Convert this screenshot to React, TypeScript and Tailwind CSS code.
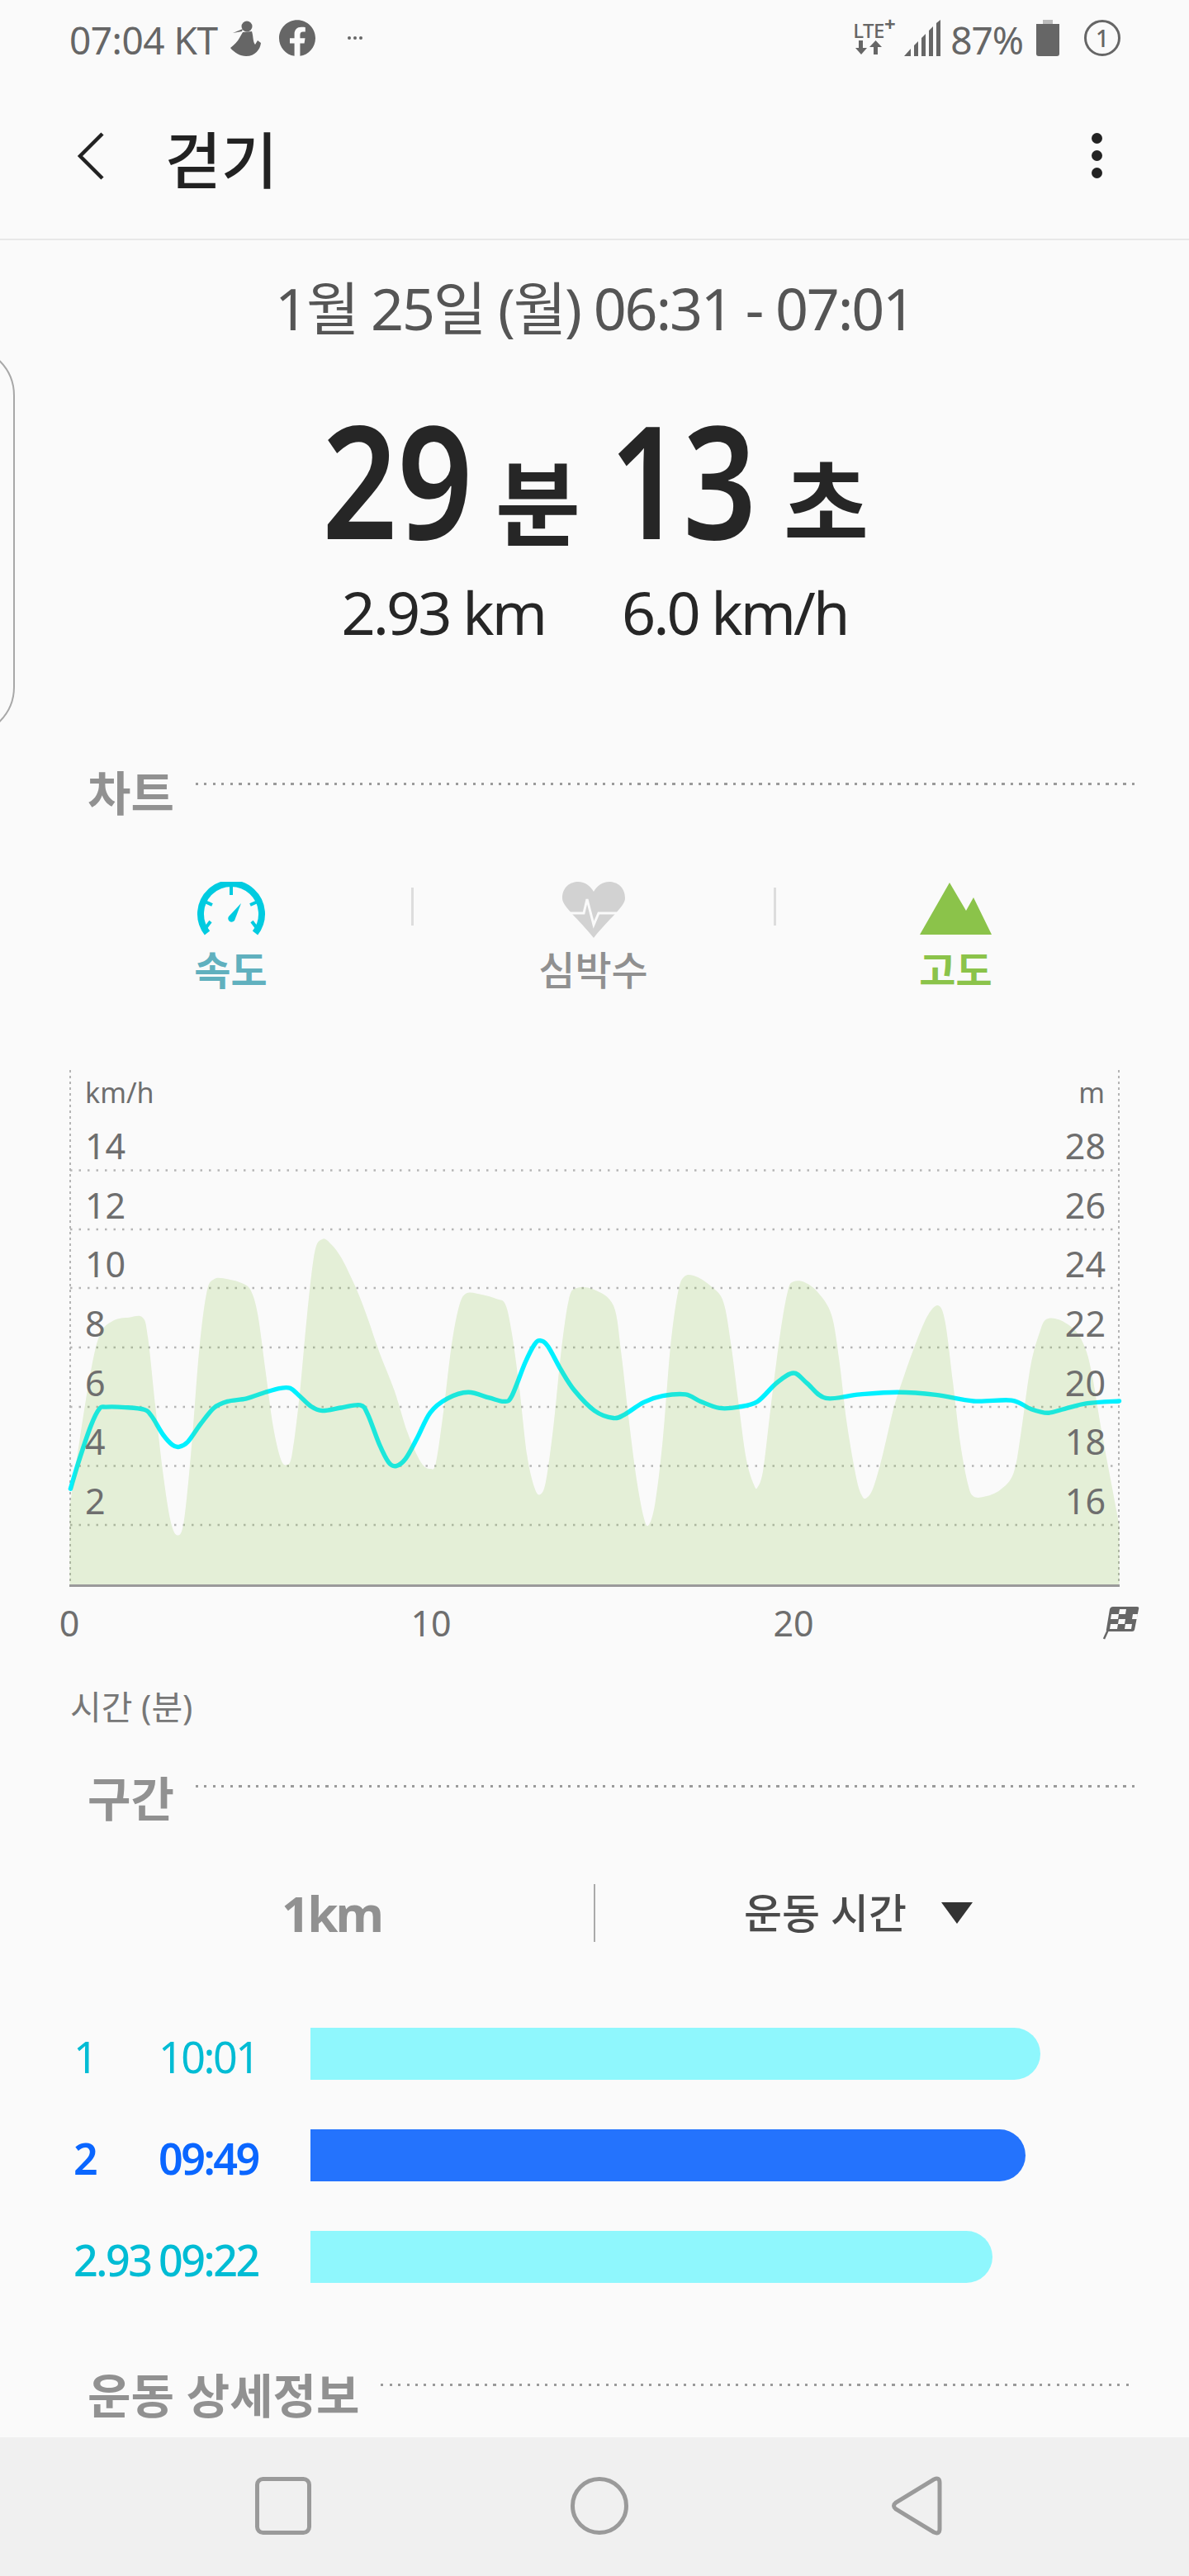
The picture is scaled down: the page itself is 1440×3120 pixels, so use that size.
import React from "react";

type Pt = [number, number];

// points are read off the reference in chart units, smoothed below
const areaPts: Pt[] = [
  [184, 1220], [210, 1040], [240, 850], [265, 750], [300, 715], [340, 707], [376, 707], [390, 760], [410, 950], [430, 1130], [450, 1260], [468, 1298], [485, 1260], [505, 1060], [525, 800], [545, 640], [565, 603], [600, 603], [640, 615], [662, 635], [680, 700], [700, 850], [720, 1000], [740, 1090], [755, 1107], [770, 1080], [790, 920], [810, 700], [830, 530], [850, 495], [870, 505], [900, 545], [940, 630], [970, 710], [1000, 800], [1040, 905], [1075, 1020], [1110, 1100], [1135, 1118], [1150, 1100], [1170, 960], [1190, 790], [1210, 680], [1230, 642], [1270, 645], [1310, 657], [1333, 672], [1350, 750], [1370, 900], [1390, 1080], [1410, 1170], [1425, 1187], [1440, 1150], [1460, 1000], [1480, 800], [1500, 660], [1520, 628], [1568, 632], [1618, 675], [1638, 800], [1658, 980], [1678, 1140], [1698, 1250], [1711, 1270], [1728, 1210], [1748, 1040], [1768, 790], [1788, 640], [1806, 595], [1838, 597], [1878, 625], [1908, 665], [1928, 780], [1948, 940], [1968, 1090], [1988, 1160], [1998, 1168], [2013, 1120], [2033, 950], [2058, 750], [2078, 635], [2093, 610], [2123, 612], [2158, 640], [2193, 700], [2213, 820], [2233, 990], [2258, 1140], [2273, 1190], [2285, 1197], [2303, 1170], [2328, 1080], [2358, 950], [2383, 870], [2418, 770], [2448, 700], [2475, 675], [2493, 720], [2513, 880], [2533, 1050], [2553, 1160], [2568, 1193], [2598, 1193], [2638, 1175], [2673, 1130], [2693, 1020], [2718, 840], [2743, 745], [2760, 712], [2793, 713], [2833, 740], [2858, 780], [2878, 850], [2908, 1030], [2952, 1270],
];

const linePts: Pt[] = [
  [186, 1172], [210, 1090], [240, 1000], [262, 955], [280, 950], [330, 951], [380, 957], [400, 975], [430, 1025], [455, 1053], [472, 1058], [495, 1045], [530, 995], [565, 952], [600, 935], [650, 927], [700, 910], [740, 899], [765, 899], [790, 920], [820, 948], [850, 960], [900, 952], [950, 945], [970, 970], [1000, 1050], [1025, 1100], [1045, 1110], [1070, 1090], [1100, 1035], [1135, 965], [1180, 927], [1235, 910], [1290, 925], [1330, 935], [1350, 920], [1385, 830], [1410, 780], [1425, 770], [1445, 785], [1480, 850], [1515, 905], [1568, 960], [1618, 980], [1648, 970], [1698, 937], [1748, 920], [1808, 916], [1848, 935], [1898, 953], [1948, 950], [1998, 935], [2048, 885], [2093, 858], [2128, 885], [2178, 926], [2268, 916], [2368, 910], [2468, 917], [2568, 934], [2668, 932], [2718, 955], [2763, 966], [2808, 955], [2868, 940], [2952, 934],
];

function smooth(pts: Pt[]) {
  let d = `M${pts[0][0]} ${pts[0][1]}`;
  for (let i = 0; i < pts.length - 1; i++) {
    const p0 = pts[i - 1] || pts[i];
    const p1 = pts[i];
    const p2 = pts[i + 1];
    const p3 = pts[i + 2] || p2;
    const c1x = p1[0] + (p2[0] - p0[0]) / 6;
    const c1y = p1[1] + (p2[1] - p0[1]) / 6;
    const c2x = p2[0] - (p3[0] - p1[0]) / 6;
    const c2y = p2[1] - (p3[1] - p1[1]) / 6;
    d += `C${c1x} ${c1y} ${c2x} ${c2y} ${p2[0]} ${p2[1]}`;
  }
  return d;
}

const gridY = [137.5, 209, 280, 352, 424, 495.5, 567];
const leftLabels = ["14", "12", "10", "8", "6", "4", "2"];
const rightLabels = ["28", "26", "24", "22", "20", "18", "16"];

function Chart() {
  return (
    <svg width="1440" height="730" viewBox="0 0 1440 730" className="block">
      {gridY.map((y) => (
        <line key={y} x1="85" x2="1355" y1={y} y2={y} stroke="#b5b5b5" strokeWidth="2.5" strokeDasharray="2.5 8" />
      ))}
      <line x1="85" x2="85" y1="16" y2="640" stroke="#b5b5b5" strokeWidth="2" strokeDasharray="3 4" />
      <line x1="1355" x2="1355" y1="16" y2="640" stroke="#b5b5b5" strokeWidth="2" strokeDasharray="3 4" />
      <g transform={`scale(${720 / 1568} ${700 / 1568})`}>
        <path d={smooth(linePts)} fill="none" stroke="#00f0ff" strokeWidth="12" strokeLinecap="round" />
        <path d={`${smooth(areaPts)}L2952 1432L184 1432Z`} fill="#8bc34a" fillOpacity="0.2" />
      </g>
      <line x1="84" x2="1356" y1="640.5" y2="640.5" stroke="#9a9a9a" strokeWidth="3" />

      <text x="103" y="56" className="fill-[#6e6e6e] text-[34px]">km/h</text>
      <text x="1338" y="56" textAnchor="end" className="fill-[#6e6e6e] text-[34px]">m</text>
      {gridY.map((y, i) => (
        <text key={leftLabels[i]} x="103" y={y - 13.5} className="fill-[#6e6e6e] text-[43px]">{leftLabels[i]}</text>
      ))}
      {gridY.map((y, i) => (
        <text key={rightLabels[i]} x="1339" y={y - 13.5} textAnchor="end" className="fill-[#6e6e6e] text-[43px]">{rightLabels[i]}</text>
      ))}
      <text x="84" y="702" textAnchor="middle" className="fill-[#6e6e6e] text-[43px]">0</text>
      <text x="522" y="702" textAnchor="middle" className="fill-[#6e6e6e] text-[43px]">10</text>
      <text x="961" y="702" textAnchor="middle" className="fill-[#6e6e6e] text-[43px]">20</text>

      {/* finish flag */}
      <g transform="translate(1335 666)">
        <path d="M13 0H42Q45 0 44 3L39 28Q38.500 30 36 30H7Q4 30 5 27L9 3Q10 0 13 0Z" fill="#666" />
        <path d="M2 39L7 28" stroke="#666" strokeWidth="2.500" />
        <path d="M21 3H29L28 9H20ZM37 9H43L42 15H36ZM20 15H28L27 21H19ZM11 9H20L19 15H10ZM28 21H36L35 27H27ZM10 21H19L18 27H9Z" fill="#fafafa" />
      </g>
    </svg>
  );
}

function SectionTitle({ title, className, lineClass }: { title: string; className: string; lineClass: string }) {
  return (
    <div className={`flex items-start pl-[106px] pr-[66px] ${className}`}>
      <span className="text-[57px] font-bold leading-[60px] text-[#919191] whitespace-nowrap">{title}</span>
      <div className={`ml-[26px] h-[3px] flex-1 bg-[repeating-linear-gradient(90deg,#9a9a9a_0_3px,transparent_3px_10.500px)] ${lineClass}`} />
    </div>
  );
}

function SpeedIcon() {
  return (
    <svg width="84" height="66" viewBox="0 0 84 66" fill="none">
      <path d="M13 62A37 37 0 1 1 71 62" stroke="#00cbe0" strokeWidth="8" />
      <path d="M42 5V16M10 24L19 28M74 24L65 28M17 48L11 56M67 48L73 56" stroke="#00cbe0" strokeWidth="4" />
      <path d="M54 26L46 47Q43 50 40 48Q37 45 39 42Z" fill="#00cbe0" />
    </svg>
  );
}

function HeartIcon() {
  return (
    <svg width="76" height="68" viewBox="0 0 76 68" fill="none">
      <path d="M38 68C20 45 0 30 0 20C0 6 10 0 19 0C28 0 34 5 38 12C42 5 48 0 57 0C66 0 76 6 76 20C76 30 56 45 38 68Z" fill="#d2d2d2" />
      <path d="M3 38H26L30 21L38 52L44 38H73" stroke="#fafafa" strokeWidth="3" />
    </svg>
  );
}

function MountainIcon() {
  return (
    <svg width="87" height="64" viewBox="0 0 87 64">
      <path d="M0 64L36 1L56 35L65 19L87 64Z" fill="#8bc34a" />
    </svg>
  );
}

function StatusBar() {
  return (
    <div className="flex h-[92px] items-center pl-[84px] pr-[83px] text-[#666]">
      <span className="mt-[4px] text-[46px] leading-none tracking-[-0.5px]">07:04 KT</span>
      <svg width="38" height="44" viewBox="0 0 38 44" className="ml-[15px]" fill="#666">
        <circle cx="20" cy="8" r="6.500" />
        <path d="M15 11L3 16L14 14ZM15 15L26 14C28 20 27 26 30 30L33 25L37 28C36 36 30 44 19 44C12 44 5 40 0 34C5 30 9 26 11 22Z" />
      </svg>
      <svg width="44" height="44" viewBox="0 0 24 24" className="ml-[21px]" fill="#666">
        <path d="M24 12.073c0-6.627-5.373-12-12-12s-12 5.373-12 12c0 5.990 4.388 10.954 10.125 11.854v-8.385H7.078v-3.470h3.047V9.430c0-3.007 1.792-4.669 4.533-4.669 1.312 0 2.686.235 2.686.235v2.953H15.830c-1.491 0-1.956.925-1.956 1.874v2.250h3.328l-.532 3.470h-2.796v8.385C19.612 23.027 24 18.062 24 12.073z" />
      </svg>
      <div className="ml-[39px] flex gap-[3px]">
        <div className="size-[4px] rounded-full bg-[#666]" />
        <div className="size-[4px] rounded-full bg-[#666]" />
        <div className="size-[4px] rounded-full bg-[#666]" />
      </div>

      <div className="ml-auto flex flex-col items-start">
        <span className="text-[24px] font-medium leading-[22px] tracking-[-0.5px]">
          LTE<span className="relative -top-[8px] text-[24px] font-bold">+</span>
        </span>
        <svg width="36" height="18" viewBox="0 0 36 18" className="ml-[3px] mt-[1px]" fill="#666">
          <path d="M4 0H9V9H14L7 17L0 9H4ZM22 17H27V8H32L24.500 0L17 8H22Z" />
        </svg>
      </div>
      <svg width="44" height="44" viewBox="0 0 44 44" className="ml-[11px]" fill="#666">
        <path d="M0 44L8 35V44ZM12 31L17 26V44H12ZM21 22L26 17V44H21ZM30 13L35 8V44H30ZM39 4L44 0V44H39Z" />
      </svg>
      <span className="ml-[12px] mt-[4px] text-[46px] leading-none tracking-[-1px]">87%</span>
      <div className="ml-[16px] flex w-[28px] flex-col items-center">
        <div className="h-[5px] w-[12px] bg-[#bbb]" />
        <div className="h-[39px] w-[28px] rounded-b-[3px] bg-[#666]" />
      </div>
      <div className="ml-[30px] flex size-[44px] items-center justify-center rounded-full border-[3.500px] border-[#666] text-[28px] font-medium leading-none">
        1
      </div>
    </div>
  );
}

const laps = [
  { no: "1", time: "10:01", width: "w-[884px]", bar: "bg-[#8ff7fd]", text: "text-[#00bcd4]", weight: "" },
  { no: "2", time: "09:49", width: "w-[866px]", bar: "bg-[#2473fd]", text: "text-[#0a66ff]", weight: "font-semibold" },
  { no: "2.93", time: "09:22", width: "w-[826px]", bar: "bg-[#8ff7fd]", text: "text-[#00bcd4]", weight: "font-medium" },
];

export default function App() {
  return (
    <div className="relative flex h-[3120px] w-[1440px] flex-col overflow-hidden bg-[#fafafa] font-['Noto_Sans','Noto_Sans_CJK_KR',sans-serif]">
      <StatusBar />

      {/* header */}
      <div className="flex h-[199px] items-center border-b-2 border-[#e8e8e8] pl-[93px] pr-[105px] pb-[4px]">
        <svg width="34" height="58" viewBox="0 0 34 58" fill="none">
          <path d="M31 2L4 29L31 56" stroke="#222" strokeWidth="4.500" />
        </svg>
        <span className="ml-[73px] mt-[10px] text-[74px] font-medium leading-none text-[#222]">걷기</span>
        <div className="ml-auto flex flex-col gap-[8px]">
          <div className="size-[13px] rounded-full bg-[#222]" />
          <div className="size-[13px] rounded-full bg-[#222]" />
          <div className="size-[13px] rounded-full bg-[#222]" />
        </div>
      </div>

      {/* summary */}
      <div className="mt-[42px] text-center text-[70px] leading-[80px] tracking-[-2.200px] text-[#555]">1월 25일 (월) 06:31 - 07:01</div>
      <div className="mt-[72px] flex h-[182px] items-baseline pl-[390px] font-semibold leading-none text-[#262626]">
        <span className="inline-block w-[172px] origin-left scale-x-[0.84] whitespace-nowrap text-[190px]">29</span>
        <span className="ml-[38px] text-[112px]">분</span>
        <span className="ml-[35px] inline-block w-[165px] origin-left scale-x-[0.82] whitespace-nowrap text-[190px]">13</span>
        <span className="ml-[46px] text-[112px]">초</span>
      </div>
      <div className="mt-[32px] flex justify-center gap-[93px] text-[72px] leading-[84px] tracking-[-3px] text-[#262626]">
        <span>2.93 km</span>
        <span>6.0 km/h</span>
      </div>

      {/* drawer handle */}
      <div className="absolute left-[-44px] top-[419px] h-[473px] w-[62px] rounded-r-[60px] border-2 border-[#a8a8a8]" />

      <SectionTitle title="차트" className="mt-[147px]" lineClass="mt-[18px]" />

      <div className="mx-[60px] mt-[78px] flex">
        <div className="flex w-[439px] flex-col items-center">
          <SpeedIcon />
          <span className="mt-[13px] text-[48px] font-bold leading-[56px] text-[#60b0be]">속도</span>
        </div>
        <div className="flex w-[439px] flex-col items-center">
          <HeartIcon />
          <span className="mt-[11px] text-[48px] font-medium leading-[56px] text-[#909090]">심박수</span>
        </div>
        <div className="flex w-[439px] flex-col items-center">
          <MountainIcon />
          <span className="mt-[15px] text-[48px] font-bold leading-[56px] text-[#8bc34a]">고도</span>
        </div>
      </div>
      <div className="absolute left-[498px] top-[1075px] h-[46px] w-[3px] bg-[#ddd]" />
      <div className="absolute left-[937px] top-[1075px] h-[46px] w-[3px] bg-[#ddd]" />

      <div className="mt-[77px]">
        <Chart />
      </div>

      <div className="mt-[32px] pl-[85px] text-[41px] leading-[50px] text-[#777]">시간 (분)</div>

      <SectionTitle title="구간" className="mt-[56px]" lineClass="mt-[14px]" />

      <div className="mt-[74px] flex h-[70px] items-center">
        <div className="flex w-[719px] justify-center pl-[84px] text-[60px] font-bold leading-none tracking-[-3px] text-[#919191]">1km</div>
        <div className="h-[70px] w-[2px] bg-[#aaa]" />
        <div className="flex flex-1 items-center justify-center pr-[82px]">
          <span className="text-[50px] font-medium leading-none text-[#4a4a4a]">운동 시간</span>
          <svg width="38" height="26" viewBox="0 0 38 26" className="ml-[42px]">
            <path d="M0 0H38L19 26Z" fill="#333" />
          </svg>
        </div>
      </div>

      <div className="mt-[104px] flex flex-col gap-[60px]">
        {laps.map((lap) => (
          <div key={lap.no} className={`flex h-[63px] items-center pl-[89px] text-[52px] leading-none ${lap.text} ${lap.weight}`}>
            <span className="mt-[6px] w-[103px] whitespace-nowrap tracking-[-2.500px]">{lap.no}</span>
            <span className="mt-[6px] w-[184px] whitespace-nowrap tracking-[-2.500px]">{lap.time}</span>
            <div className={`h-[63px] rounded-r-full ${lap.width} ${lap.bar}`} />
          </div>
        ))}
      </div>

      <SectionTitle title="운동 상세정보" className="mt-[106px]" lineClass="mt-[16px]" />

      {/* nav bar */}
      <div className="mt-auto flex h-[168px] items-center bg-[#f0f0f0] pl-[309px] pb-[2px]">
        <svg width="68" height="70" viewBox="0 0 68 70" fill="none">
          <rect x="2.500" y="2.500" width="63" height="65" rx="7" stroke="#9a9a9a" strokeWidth="5" />
        </svg>
        <svg width="70" height="70" viewBox="0 0 70 70" fill="none" className="ml-[314px]">
          <circle cx="35" cy="35" r="32.500" stroke="#9a9a9a" strokeWidth="5" />
        </svg>
        <svg width="62" height="72" viewBox="0 0 62 72" fill="none" className="ml-[318px]">
          <path d="M52 4Q59 1 59 8V64Q59 71 52 68L6 40Q1 36 6 32Z" stroke="#9a9a9a" strokeWidth="5" />
        </svg>
      </div>
    </div>
  );
}
